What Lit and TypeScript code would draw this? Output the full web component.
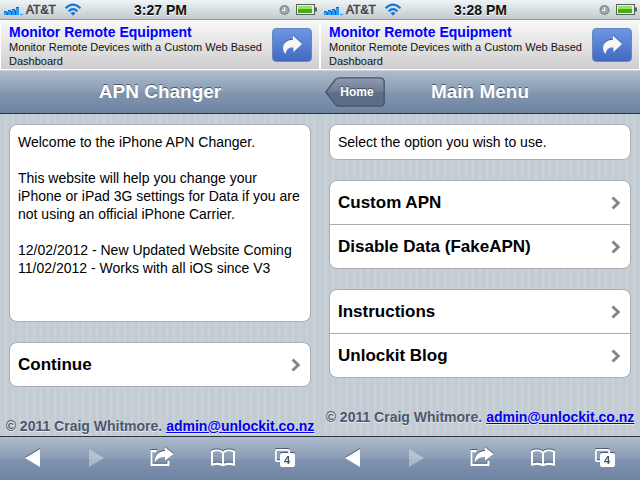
import { LitElement, html, css, svg, nothing } from "lit";
import { customElement, property } from "lit/decorators.js";

interface Screen {
  time: string;
  title: string;
  back?: string;
  text: string[];
  tall?: boolean;
  menus: string[][];
}

const screens: Screen[] = [
  {
    time: "3:27 PM",
    title: "APN Changer",
    text: [
      "Welcome to the iPhone APN Changer.",
      "This website will help you change your iPhone or iPad 3G settings for Data if you are not using an official iPhone Carrier.",
      "12/02/2012 - New Updated Website Coming\n11/02/2012 - Works with all iOS since V3",
    ],
    tall: true,
    menus: [["Continue"]],
  },
  {
    time: "3:28 PM",
    title: "Main Menu",
    back: "Home",
    text: ["Select the option you wish to use."],
    menus: [
      ["Custom APN", "Disable Data (FakeAPN)"],
      ["Instructions", "Unlockit Blog"],
    ],
  },
];

@customElement("status-bar")
class StatusBar extends LitElement {
  @property() time = "";

  static styles = css`
    :host {
      display: grid;
      grid-template-columns: 1fr auto 1fr;
      align-items: center;
      height: 20px;
      box-sizing: border-box;
      padding: 0 3px 0 4px;
      border-bottom: 1px solid #8f9799;
      background: linear-gradient(#eef4f6, #c3cbce);
      font-size: 12px;
      line-height: 18px;
      text-shadow: 0 1px 0 #fff;
    }
    .side {
      display: flex;
      align-items: center;
      gap: 3px;
      color: #444;
    }
    .end {
      justify-content: flex-end;
      gap: 6px;
    }
    .carrier {
      padding-right: 5px;
      font-size: 12px;
      -webkit-text-stroke: 0.6px #444;
    }
    .time {
      font-size: 14px;
      font-weight: bold;
      color: #111;
    }
    svg {
      display: block;
      flex: none;
    }
  `;

  render() {
    return html`
      <div class="side">
        <svg width="19" height="10" viewBox="0 0 19 10" fill="#2a9bf5">
          <path d="M0 6h3v4H0zM4 5h3v5H4zM8 4h3v6H8zM12 2h3v8h-3z" />
          <path d="M0 6h3v1H0zM4 5h3v1H4zM8 4h3v1H8zM12 2h3v1h-3zM3 7h1v3H3zM7 6h1v4H7zM11 5h1v5h-1z" fill="#1263c4" />
          <path d="M16 9h3v1h-3z" />
        </svg>
        <span class="carrier">AT&amp;T</span>
        <svg width="18" height="13" viewBox="0 0 18 13" fill="none" stroke="#1478dc" stroke-width="2">
          <path d="M1.500 5.200Q9 -2 16.500 5.200" />
          <path d="M4.500 8.200Q9 4 13.500 8.200" />
          <path d="M6.500 10Q9 8 11.500 10L9 12.800Z" fill="#1478dc" stroke="none" />
        </svg>
      </div>
      <span class="time">${this.time}</span>
      <div class="side end">
        <svg width="11" height="12" viewBox="0 0 11 12">
          <circle cx="5.500" cy="6" r="5" fill="#858d8f" />
          <circle cx="5.500" cy="6" r="3.500" fill="#a3abad" />
          <path d="M5.500 3V6.500H3" fill="none" stroke="#f4f8f9" stroke-width="1.200" />
        </svg>
        <svg width="21" height="11" viewBox="0 0 21 11">
          <rect x=".5" y=".5" width="18" height="10" fill="#e8efe4" stroke="#5a6258" />
          <rect x="2" y="2" width="14" height="7" fill="#45ad14" />
          <rect x="2" y="2" width="14" height="3" fill="#9be062" />
          <path d="M19 3.500h2v4h-2z" fill="#5a6258" />
        </svg>
      </div>
    `;
  }
}

@customElement("ad-banner")
class AdBanner extends LitElement {
  static styles = css`
    :host {
      display: flex;
      align-items: center;
      justify-content: space-between;
      height: 50px;
      box-sizing: border-box;
      padding: 0 7px 0 8px;
      border: 1px solid #fff;
      background: linear-gradient(#f8f8f8, #cecece);
    }
    .copy {
      display: block;
      padding-top: 2px;
      color: #111;
      font-size: 11px;
      line-height: 14px;
      text-decoration: none;
    }
    .headline {
      display: block;
      color: #00f;
      font-size: 14px;
      line-height: 16px;
      font-weight: bold;
    }
    .go {
      flex: none;
      width: 40px;
      height: 34px;
      padding: 0;
      border: 1px solid #6c86bb;
      border-radius: 4px;
      background: linear-gradient(#6b97e4, #4269c2);
    }
    svg {
      display: block;
      margin: auto;
    }
  `;

  render() {
    return html`
      <a class="copy" href="#">
        <span class="headline">Monitor Remote Equipment</span>
        Monitor Remote Devices with a Custom Web Based Dashboard
      </a>
      <button class="go" aria-label="Open advertisement">
        <svg width="22" height="22" viewBox="0 0 24 24">
          <path d="M13 1.500L23 11L13.500 19.500V14.800C8.500 14.300 6 16.500 5 22C-1 15 3 6.500 13 6.200Z" transform="translate(0 -1)" fill="#4d5a78" />
          <path d="M13 1.500L23 11L13.500 19.500V14.800C8.500 14.300 6 16.500 5 22C-1 15 3 6.500 13 6.200Z" fill="#f7f7f7" />
        </svg>
      </button>
    `;
  }
}

const toolIcons = [
  {
    label: "Back",
    shape: svg`<path d="M5 14L20 5V23Z" />`,
  },
  {
    label: "Forward",
    dim: true,
    shape: svg`<path d="M6 5L21 14L6 23Z" />`,
  },
  {
    label: "Share",
    shape: svg`
      <path d="M10.500 6H3.500V22H22.500V16.500H20.500V19.800H5.500V8.200H8.500Z" />
      <path d="M18 3L26.500 10L18 16.500V13C13 12.800 10.500 14.500 7.500 18.300C8 11.500 11 7.300 18 7Z" />`,
  },
  {
    label: "Bookmarks",
    shape: svg`
      <path fill-rule="evenodd" d="M13 7.500C10.500 5 4 5 1 7V22C5 20.500 10 20.500 13 22.500C16 20.500 20.500 20.500 25 22V7C21.500 5 15.500 5 13 7.500ZM3 8.200C6 6.800 10 7.200 12 9V19.500C9.500 18.200 6 18.200 3 19.200ZM14 9C16.500 7.200 20.500 6.800 23 8.200V19.200C20.500 18.200 17 18.200 14 19.500Z" />`,
  },
  {
    label: "Pages",
    shape: svg`
      <path fill-rule="evenodd" d="M4 5H15Q17 5 17 7V9H15.200V6.800H3.800V16.200H7V18H4Q2 18 2 16V7Q2 5 4 5Z" />
      <rect x="7" y="9" width="15" height="14" rx="2" />
      <text x="14" y="20" text-anchor="middle" class="count">4</text>`,
  },
];

@customElement("phone-screen")
class PhoneScreen extends LitElement {
  @property({ attribute: false }) screen!: Screen;

  static styles = css`
    :host {
      display: flex;
      flex-direction: column;
      min-height: 100vh;
      min-width: 0;
      background: repeating-linear-gradient(90deg, #c4ccd3 0 5px, #cad2d7 5px 7px);
    }
    header {
      display: grid;
      grid-template-columns: 1fr auto 1fr;
      align-items: center;
      height: 44px;
      box-sizing: border-box;
      padding: 0 5px;
      border-top: 1px solid #cad3df;
      border-bottom: 1px solid #2d3642;
      background: linear-gradient(#b0bccd, #889bb3 50%, #8195af 51%, #6d84a2);
    }
    h1 {
      grid-column: 2;
      margin: 0;
      color: #fff;
      font-size: 19px;
      line-height: 24px;
      text-shadow: 0 -1px 0 #4b5667;
    }
    .back {
      display: grid;
      justify-self: start;
      width: 60px;
      height: 30px;
      padding: 0;
      border: 0;
      background: none;
      color: #fff;
      font: bold 12px/30px "Liberation Sans", Arial, sans-serif;
      text-shadow: 0 -1px 0 #3c4656;
    }
    .back svg,
    .back span {
      grid-area: 1 / 1;
    }
    .back span {
      padding-left: 4px;
    }
    main {
      flex: 1;
      padding: 10px 9px 0;
    }
    .card {
      box-sizing: border-box;
      margin: 0 0 20px;
      border: 1px solid #a9adb1;
      border-radius: 8px;
      background: #fff;
    }
    .note {
      padding: 8px;
      font-size: 14px;
      line-height: 18px;
      white-space: pre-line;
    }
    .tall {
      min-height: 198px;
    }
    .note p {
      margin: 0;
    }
    .note p + p {
      margin-top: 18px;
    }
    ul {
      padding: 0;
      list-style: none;
    }
    li + li {
      border-top: 1px solid #a9adb1;
    }
    .item {
      display: flex;
      align-items: center;
      justify-content: space-between;
      height: 43px;
      padding: 0 9px 0 8px;
      color: #000;
      font-size: 17px;
      font-weight: bold;
      text-decoration: none;
    }
    footer {
      margin: 0 -9px;
      padding: 9px 0 0;
      color: #4c566c;
      font-size: 14px;
      line-height: 20px;
      font-weight: bold;
      text-align: center;
      text-shadow: 0 1px 0 #e6ebee;
      white-space: nowrap;
    }
    footer a {
      color: #00e;
    }
    nav {
      display: flex;
      justify-content: space-between;
      height: 44px;
      box-sizing: border-box;
      padding: 0 20px;
      border-top: 1px solid #2d3642;
      background: linear-gradient(#b0bccd, #889bb3 50%, #7f94b0 51%, #6d84a2);
    }
    nav button {
      padding: 7px 0 9px;
      border: 0;
      background: none;
      color: #fff;
    }
    nav svg {
      display: block;
      fill: #fff;
      filter: drop-shadow(0 -1px 0 #4b5a70);
    }
    nav .dim {
      opacity: 0.35;
    }
    nav .dim svg {
      filter: none;
    }
    .count {
      fill: #46546a;
      font: bold 11px "Liberation Sans", Arial, sans-serif;
    }
  `;

  render() {
    const s = this.screen;
    return html`
      <status-bar .time=${s.time}></status-bar>
      <ad-banner></ad-banner>
      <header>
        ${s.back
          ? html`<button class="back">
              <svg width="60" height="30" viewBox="0 0 60 30">
                <defs>
                  <linearGradient id="back-fill" x2="0" y2="1">
                    <stop offset="0" stop-color="#8f9bb0" />
                    <stop offset=".5" stop-color="#6b7a94" />
                    <stop offset=".51" stop-color="#5f6f8b" />
                    <stop offset="1" stop-color="#5b6b86" />
                  </linearGradient>
                </defs>
                <path
                  d="M.8 15C4 11 8 5.500 10.500 2.500Q12 .8 14.500 .8H55Q59.200 .8 59.200 5V25Q59.200 29.200 55 29.200H14.500Q12 29.200 10.500 27.500C8 24.500 4 19 .8 15Z"
                  fill="url(#back-fill)"
                  stroke="#475368"
                  stroke-width="1.300"
                />
              </svg>
              <span>${s.back}</span>
            </button>`
          : nothing}
        <h1>${s.title}</h1>
      </header>
      <main>
        <div class="card note ${s.tall ? "tall" : ""}">${s.text.map((t) => html`<p>${t}</p>`)}</div>
        ${s.menus.map(
          (menu) => html`<ul class="card">
            ${menu.map(
              (label) => html`<li>
                <a class="item" href="#">
                  ${label}
                  <svg width="10" height="14" viewBox="0 0 10 14" fill="none" stroke="#858585" stroke-width="3">
                    <path d="M1.500 1.500L7.200 7L1.500 12.500" />
                  </svg>
                </a>
              </li>`
            )}
          </ul>`
        )}
        <footer>© 2011 Craig Whitmore. <a href="mailto:admin@unlockit.co.nz">admin@unlockit.co.nz</a></footer>
      </main>
      <nav>
        ${toolIcons.map(
          (t) => html`<button class=${t.dim ? "dim" : ""} aria-label=${t.label} ?disabled=${!!t.dim}>
            <svg width="27" height="27" viewBox="0 0 27 27">${t.shape}</svg>
          </button>`
        )}
      </nav>
    `;
  }
}

@customElement("app-root")
class AppRoot extends LitElement {
  static styles = css`
    :host {
      display: grid;
      grid-template-columns: 1fr 1fr;
      min-height: 100vh;
      font-family: "Liberation Sans", Arial, sans-serif;
    }
  `;

  render() {
    return screens.map((s) => html`<phone-screen .screen=${s}></phone-screen>`);
  }
}
